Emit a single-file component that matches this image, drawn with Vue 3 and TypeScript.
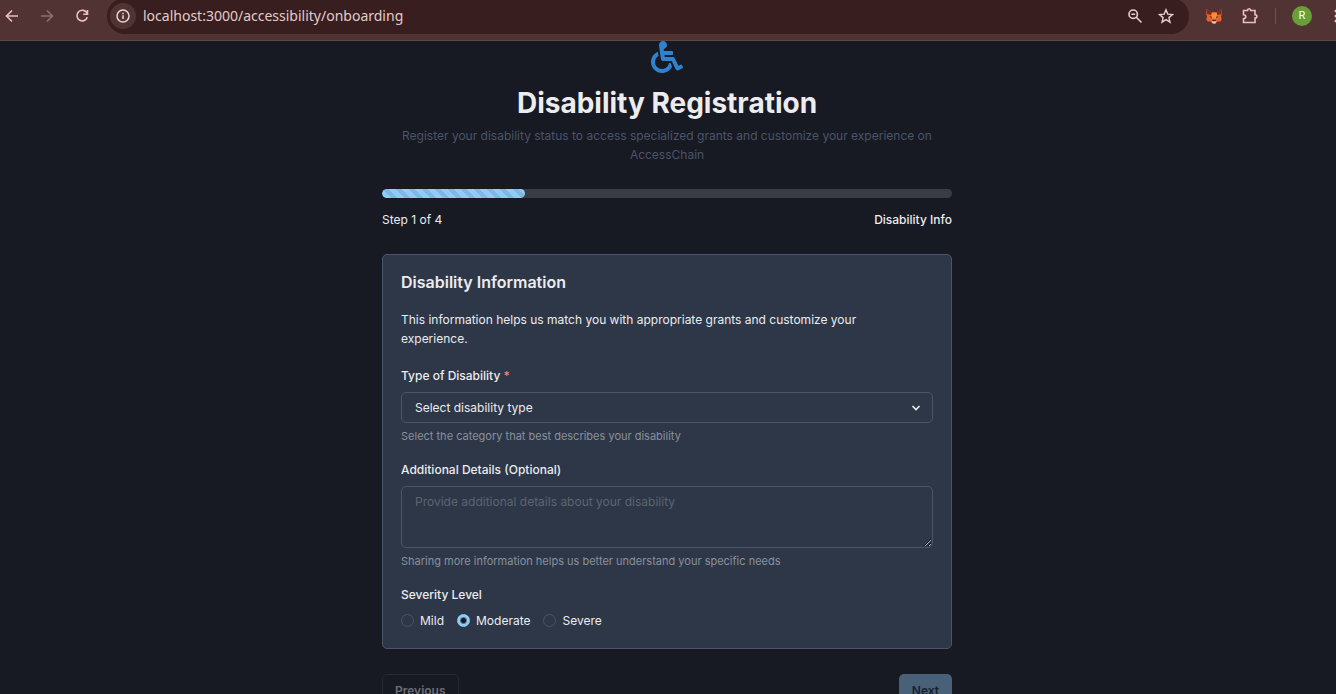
<script setup lang="ts">
import { ref } from 'vue'

const disabilityType = ref('')
const details = ref('')
const severity = ref('moderate')
const step = ref(1)
const totalSteps = 4
const levels = [
  { value: 'mild', label: 'Mild' },
  { value: 'moderate', label: 'Moderate' },
  { value: 'severe', label: 'Severe' },
]
</script>

<template>
  <div class="window">
    <header class="toolbar">
      <nav class="nav" aria-label="Browser navigation">
        <button class="tool" type="button" aria-label="Back">
          <svg viewBox="0 0 16 16"><path d="M14 8H2.500M8 2.500 2.500 8 8 13.500" /></svg>
        </button>
        <button class="tool dim" type="button" aria-label="Forward">
          <svg viewBox="0 0 16 16"><path d="M2 8h11.500M8 2.500 13.500 8 8 13.500" /></svg>
        </button>
        <button class="tool" type="button" aria-label="Reload">
          <svg viewBox="0 0 16 16"><path d="M13 5.200A5.300 5.300 0 1 0 13.300 9.300M13.500 2v4.200H9.200" /></svg>
        </button>
      </nav>
      <div class="address">
        <button class="site" type="button" aria-label="Site information">
          <svg viewBox="0 0 16 16"><circle cx="8" cy="8" r="6" /><path d="M8 7.300v3.700M8 4.700v1.500" /></svg>
        </button>
        <input class="url" type="text" aria-label="Address" value="localhost:3000/accessibility/onboarding" />
        <button class="tool pale" type="button" aria-label="Zoom">
          <svg viewBox="0 0 16 16"><circle cx="6.200" cy="6.200" r="4.200" /><path d="M9.300 9.300 14.500 14.500M4.300 6.200h3.800" /></svg>
        </button>
        <button class="tool pale" type="button" aria-label="Bookmark">
          <svg viewBox="0 0 16 16"><path class="thin" d="m8 1.800 1.800 4.300 4.700.4-3.600 3.100 1.100 4.600L8 11.700l-4 2.500 1.100-4.600L1.500 6.500l4.700-.4z" /></svg>
        </button>
      </div>
      <div class="extensions">
        <button class="tool" type="button" aria-label="MetaMask">
          <svg class="fox" viewBox="0 0 18 18">
            <path fill="#e8622c" d="M1.500 2 7 5.500h4.500L16.500 2l.5 4.500-1 3 .8 2.500-1.300 2.500-3 0L10.500 16.500h-3L5.500 14.500l-3 0L1.300 12l.8-2.500-1-3z" />
            <path fill="#7c2b1c" d="M1.500 2 7 5.500 6 8 2 7zM16.500 2 11.500 5.500l1 2.500 4-1z" />
            <path fill="#ff8a3a" d="M7 5.500h4.500l1 5L9.200 12 6 10.500z" />
            <path fill="#3a2b30" d="m4.500 9.200 2.500.6-.5 1.400zM13.500 9.200 11 9.800l.5 1.400zM7.500 12.800h3.300v1.200H7.500z" />
            <path fill="#d8cdca" d="m6.800 13.800 1.200.7h2.300l1.200-.7-1 2.700h-2.800z" />
          </svg>
        </button>
        <button class="tool" type="button" aria-label="Extensions">
          <svg viewBox="0 0 18 18"><path d="M3.500 3.500h4c0-2.300 3.200-2.300 3.200 0H15v4.300c2.500 0 2.500 3.200 0 3.200v4.500H3.500v-3.800c3-.2 3-3.700 0-3.900z" /></svg>
        </button>
        <span class="divider"></span>
        <button class="avatar" type="button" aria-label="Profile">R</button>
        <button class="more" type="button" aria-label="Menu">
          <svg viewBox="0 0 4 16"><circle cx="2" cy="3" r="1.500" /><circle cx="2" cy="8" r="1.500" /><circle cx="2" cy="13" r="1.500" /></svg>
        </button>
      </div>
    </header>

    <div class="content">
      <main class="page">
        <div class="intro">
          <svg class="logo" viewBox="0 0 512 512" aria-hidden="true">
            <path d="M496.101 385.669l14.227 28.663c3.929 7.915.697 17.516-7.218 21.445l-65.465 32.886c-16.049 7.967-35.556 1.194-43.189-15.055L331.679 320H192c-15.925 0-29.426-11.710-31.679-27.475C126.433 55.308 128.380 70.044 128 64c0-36.358 30.318-65.635 67.052-63.929 33.271 1.545 60.048 28.905 60.925 62.201.868 32.933-23.152 60.423-54.608 65.039l4.670 32.690H336c8.837 0 16 7.163 16 16v32c0 8.837-7.163 16-16 16H215.182l4.572 32H352a32 32 0 0 1 28.962 18.392L438.477 396.800l36.178-18.349c7.915-3.929 17.517-.697 21.446 7.218zM311.358 352h-24.506c-7.788 54.204-54.528 96-110.852 96-61.757 0-112-50.243-112-112 0-41.505 22.694-77.809 56.324-97.156-3.712-25.965-6.844-47.860-9.488-66.333C45.956 198.464 0 261.963 0 336c0 97.047 78.953 176 176 176 71.870 0 133.806-43.308 161.110-105.192L311.358 352z" />
          </svg>
          <h1>Disability Registration</h1>
          <p>Register your disability status to access specialized grants and customize your experience on AccessChain</p>
        </div>

        <div class="progress" role="progressbar" aria-label="Registration progress" :aria-valuenow="step" aria-valuemin="0" :aria-valuemax="totalSteps">
          <div class="bar" :style="{ width: (step / totalSteps) * 100 + '%' }"></div>
        </div>
        <div class="steps">
          <span>Step {{ step }} of {{ totalSteps }}</span>
          <span class="current">Disability Info</span>
        </div>

        <form @submit.prevent>
          <section class="card">
            <h2>Disability Information</h2>
            <p class="lead">This information helps us match you with appropriate grants and customize your experience.</p>

            <div class="field">
              <label class="label" for="type">Type of Disability <span class="star">*</span></label>
              <div class="select">
                <select id="type" v-model="disabilityType" required>
                  <option value="">Select disability type</option>
                  <option value="physical">Physical</option>
                  <option value="visual">Visual</option>
                  <option value="hearing">Hearing</option>
                  <option value="cognitive">Cognitive</option>
                </select>
                <svg class="chevron" viewBox="0 0 10 10" aria-hidden="true"><path d="M1.500 3 5 6.500 8.500 3" /></svg>
              </div>
              <p class="help">Select the category that best describes your disability</p>
            </div>

            <div class="field">
              <label class="label" for="details">Additional Details (Optional)</label>
              <textarea id="details" v-model="details" placeholder="Provide additional details about your disability"></textarea>
              <p class="help">Sharing more information helps us better understand your specific needs</p>
            </div>

            <fieldset>
              <legend class="label">Severity Level</legend>
              <div class="radios">
                <label v-for="l in levels" :key="l.value" class="radio">
                  <input v-model="severity" type="radio" name="severity" :value="l.value" />
                  {{ l.label }}
                </label>
              </div>
            </fieldset>
          </section>

          <div class="actions">
            <button class="btn previous" type="button" disabled>Previous</button>
            <button class="btn next" type="button" disabled>Next</button>
          </div>
        </form>
      </main>
    </div>
  </div>
</template>

<style>
html,
body {
  height: 100%;
  overflow: hidden;
  background: #171923;
}
#app {
  height: 100%;
}
</style>

<style scoped>
* {
  box-sizing: border-box;
}
h1,
h2,
p {
  margin: 0;
}
button,
input,
select,
textarea {
  font: inherit;
  color: inherit;
}
.window {
  height: 100%;
  display: flex;
  flex-direction: column;
  overflow: hidden;
  color: #ececee;
  font: 400 12px/19px Inter, sans-serif;
}
.toolbar {
  flex: none;
  display: flex;
  height: 41px;
  padding-bottom: 8px;
  background: #503332;
  border-bottom: 1px solid #5c4745;
  overflow: hidden;
}
.nav {
  display: flex;
  align-items: center;
  gap: 19px;
  padding: 0 17px 0 4px;
}
.tool {
  display: flex;
  width: 16px;
  height: 16px;
  padding: 0;
  border: 0;
  background: none;
  color: #f0bfbd;
}
.tool svg {
  width: 100%;
  height: 100%;
  fill: none;
  stroke: currentColor;
  stroke-width: 1.6;
}
.tool .thin {
  stroke-width: 1.4;
}
.tool.dim {
  color: #936e6d;
}
.tool.pale {
  color: #e4d0cf;
}
.address {
  flex: 1;
  display: flex;
  align-items: center;
  gap: 15px;
  margin: -2px 0;
  padding: 0 15px 0 3px;
  background: #381e1e;
  border-radius: 18px;
}
.site {
  display: flex;
  align-items: center;
  justify-content: center;
  width: 26px;
  height: 26px;
  padding: 0;
  border: 0;
  border-radius: 50%;
  background: #503332;
  color: #ead5d4;
}
.site svg {
  width: 16px;
  height: 16px;
  fill: none;
  stroke: currentColor;
  stroke-width: 1.5;
}
.url {
  flex: 1;
  min-width: 0;
  margin-left: -8px;
  padding: 0;
  border: 0;
  outline: 0;
  background: none;
  color: #e2cccb;
  font: 14px/20px "Noto Sans", sans-serif;
}
.extensions {
  display: flex;
  align-items: center;
  padding-left: 16px;
}
.extensions .tool {
  width: 18px;
  height: 18px;
  margin-right: 17px;
}
.extensions .fox {
  stroke: none;
}
.divider {
  width: 1px;
  height: 16px;
  margin-right: 16px;
  background: #745150;
}
.avatar {
  width: 20px;
  height: 20px;
  padding: 0;
  border: 0;
  border-radius: 50%;
  background: #689f38;
  color: #fff;
  font: 11px/20px Roboto, sans-serif;
}
.more {
  display: flex;
  width: 4px;
  margin: 0 -2px 0 22px;
  padding: 0;
  border: 0;
  background: none;
  fill: #f0bfbd;
}
.more svg {
  width: 4px;
  height: 16px;
}
.content {
  flex: 1;
  min-height: 0;
  padding-right: 2px;
}
.page {
  width: 100%;
  max-width: 570px;
  margin: 0 auto;
}
.intro {
  display: flex;
  flex-direction: column;
  align-items: center;
  margin-bottom: 25px;
  text-align: center;
  color: #4a5568;
}
.logo {
  width: 32px;
  height: 32px;
  fill: #3182ce;
}
h1 {
  margin: 13px 0 5px;
  color: #ececee;
  font-size: 28px;
  font-weight: 700;
  line-height: 35px;
}
.progress {
  height: 9px;
  border-radius: 5px;
  background: #3a3c44;
  overflow: hidden;
}
.bar {
  height: 100%;
  border-radius: 5px;
  background: linear-gradient(45deg, #82b8dc 25%, #90cdf4 25%, #90cdf4 50%, #82b8dc 50%, #82b8dc 75%, #90cdf4 75%) 0 0 / 13px 13px;
}
.steps {
  display: flex;
  justify-content: space-between;
  margin-top: 12px;
}
.current,
.label {
  font-weight: 500;
}
.card {
  margin-top: 25px;
  padding: 18px;
  border: 1px solid #4a5568;
  border-radius: 5px;
  background: #2d3748;
}
h2 {
  font-size: 16px;
  font-weight: 600;
  line-height: 19px;
}
.lead {
  max-width: 500px;
  margin: 18px 0;
}
.field {
  margin-bottom: 16px;
}
.label {
  display: block;
  padding: 0;
}
.star {
  color: #f57f80;
}
.select {
  display: grid;
  align-items: center;
  margin-top: 7px;
}
.select > * {
  grid-area: 1 / 1;
}
select {
  appearance: none;
  width: 100%;
  height: 31px;
  padding: 0 32px 1px 13px;
  border: 1px solid #4c5564;
  border-radius: 5px;
  background: none;
}
.chevron {
  justify-self: end;
  width: 10px;
  height: 10px;
  margin-right: 12px;
  fill: none;
  stroke: #ececee;
  stroke-width: 1.6;
  pointer-events: none;
}
textarea {
  display: block;
  width: 100%;
  height: 62px;
  margin-top: 7px;
  padding: 5px 13px;
  border: 1px solid #4c5564;
  border-radius: 5px;
  background: none;
  resize: vertical;
}
textarea::placeholder {
  color: #5c6470;
  opacity: 1;
}
.help {
  margin-top: 6px;
  color: #8a919c;
  font-size: 11px;
  line-height: 15px;
}
fieldset {
  margin: 0;
  padding: 1px 0 0;
  border: 0;
}
.radios {
  display: flex;
  gap: 13px;
  margin-top: 6px;
}
.radio {
  display: flex;
  align-items: center;
  gap: 6px;
}
.radio input {
  appearance: none;
  width: 13px;
  height: 13px;
  margin: 0;
  border: 1px solid #4a5568;
  border-radius: 50%;
}
.radio input:checked {
  border-color: #90cdf4;
  background: radial-gradient(circle, #171923 2px, #90cdf4 4px);
}
.actions {
  display: flex;
  justify-content: space-between;
  margin-top: 25px;
}
.btn {
  height: 32px;
  padding: 0 12px;
  border: 1px solid transparent;
  border-radius: 5px;
  font-weight: 600;
}
.previous {
  border-color: #272931;
  background: none;
  color: #6c6d74;
}
.next {
  background: #486178;
  color: #1a202c;
}
</style>
